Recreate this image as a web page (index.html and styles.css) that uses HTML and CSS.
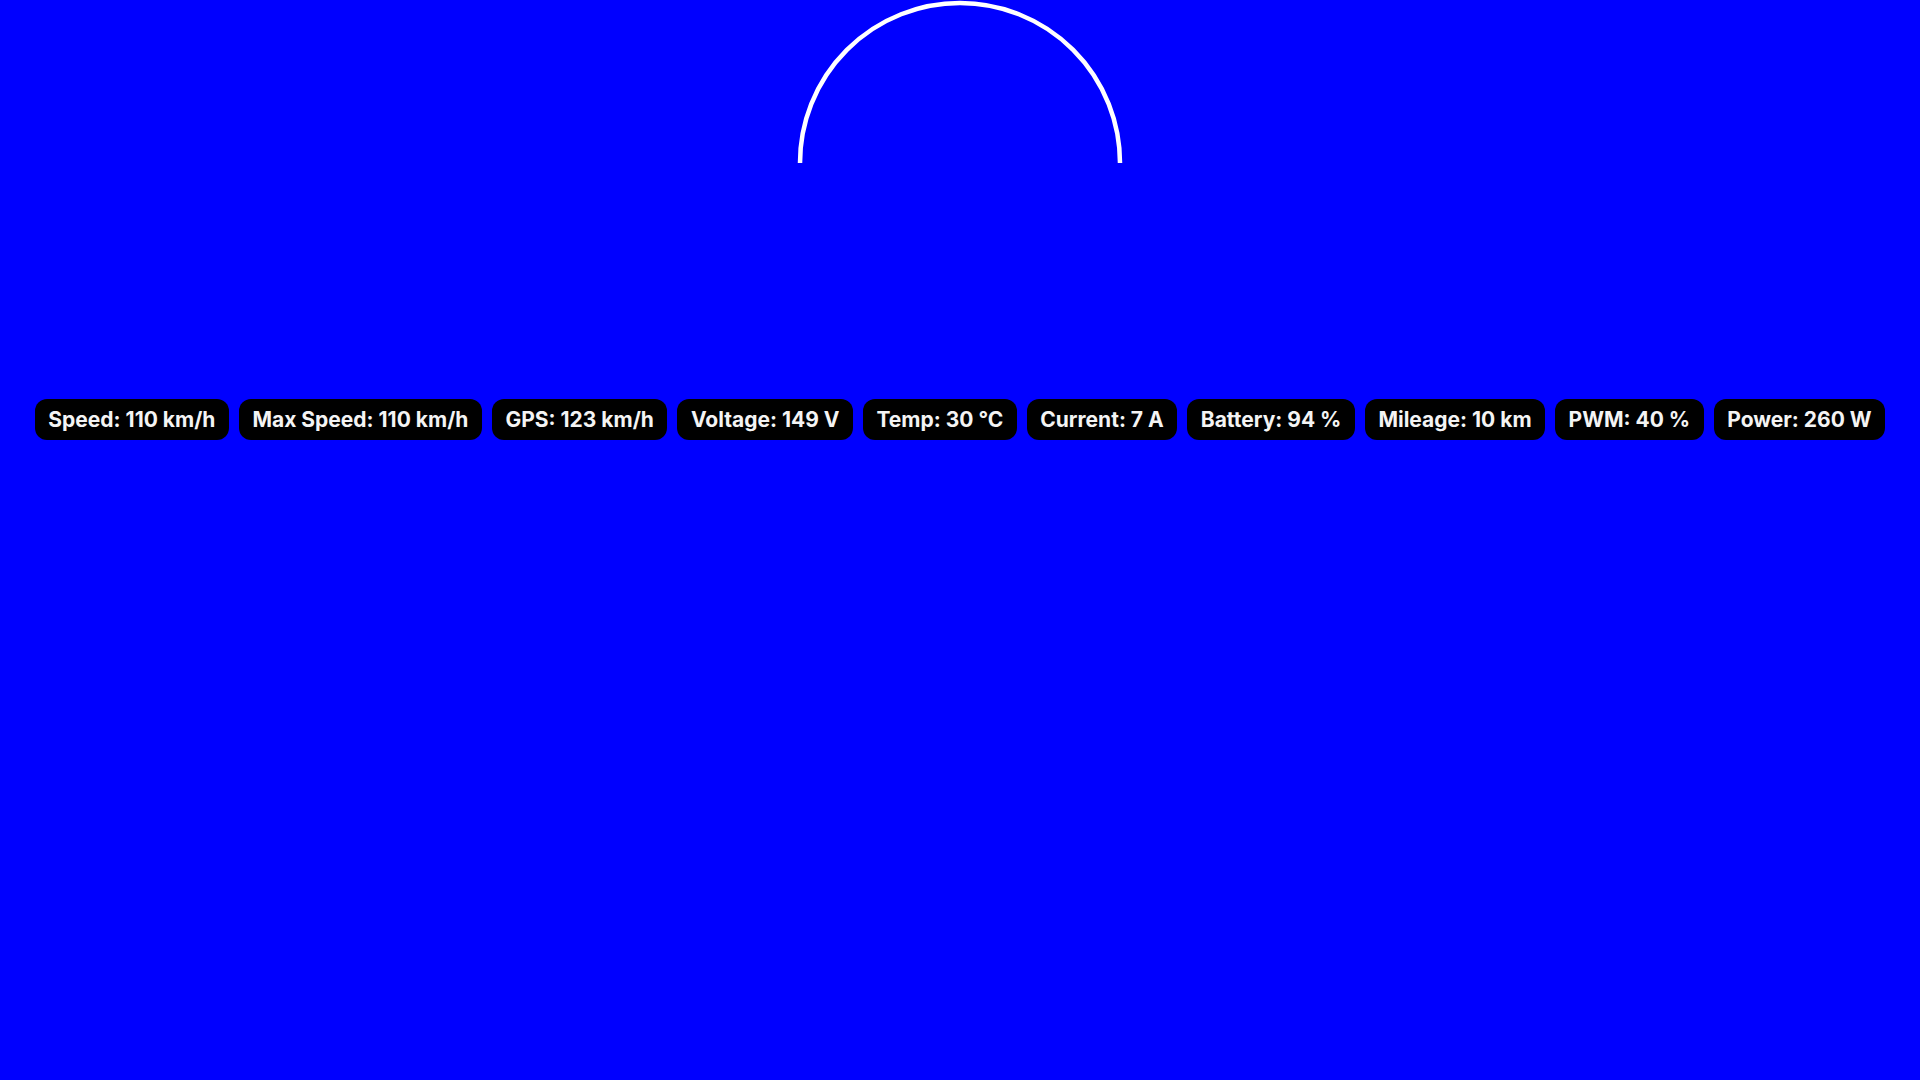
FILE: index.html
```html
<!DOCTYPE html>
<html lang="en">
<head>
<meta charset="utf-8">
<title>Dashboard</title>
<link rel="stylesheet" href="styles.css">
</head>
<body>
<div class="screen">
  <div class="gauge">
    <svg class="gauge-arc" width="330" height="166" viewBox="795.5 0 330 166" xmlns="http://www.w3.org/2000/svg">
      <path d="M 800.5 163 A 160 160 0 0 1 1120.5 163" fill="none" stroke="#ffffff" stroke-width="4.5"/>
    </svg>
  </div>
  <div class="stats">
    <div class="pill">Speed: 110 km/h</div>
    <div class="pill">Max Speed: 110 km/h</div>
    <div class="pill">GPS: 123 km/h</div>
    <div class="pill">Voltage: 149 V</div>
    <div class="pill">Temp: 30 °C</div>
    <div class="pill">Current: 7 A</div>
    <div class="pill">Battery: 94 %</div>
    <div class="pill">Mileage: 10 km</div>
    <div class="pill">PWM: 40 %</div>
    <div class="pill">Power: 260 W</div>
  </div>
</div>
</body>
</html>
```
FILE: styles.css
```css
html, body {
  margin: 0;
  padding: 0;
  background: #0000ff;
  width: 1920px;
  height: 1080px;
  overflow: hidden;
}
.screen {
  display: flex;
  flex-direction: column;
  width: 1920px;
  height: 1080px;
  font-family: Inter, "Noto Sans", sans-serif;
}
.gauge {
  height: 399px;
  display: flex;
  justify-content: center;
  align-items: flex-start;
}
.gauge-arc {
  display: block;
}
.stats {
  display: flex;
  justify-content: center;
  gap: 10px;
}
.pill {
  background: #000000;
  color: #f4f4f4;
  height: 41px;
  box-sizing: border-box;
  padding: 0 13.5px;
  border-radius: 12px;
  display: flex;
  align-items: center;
  font-size: 21px;
  font-weight: 700;
  white-space: nowrap;
}
```
